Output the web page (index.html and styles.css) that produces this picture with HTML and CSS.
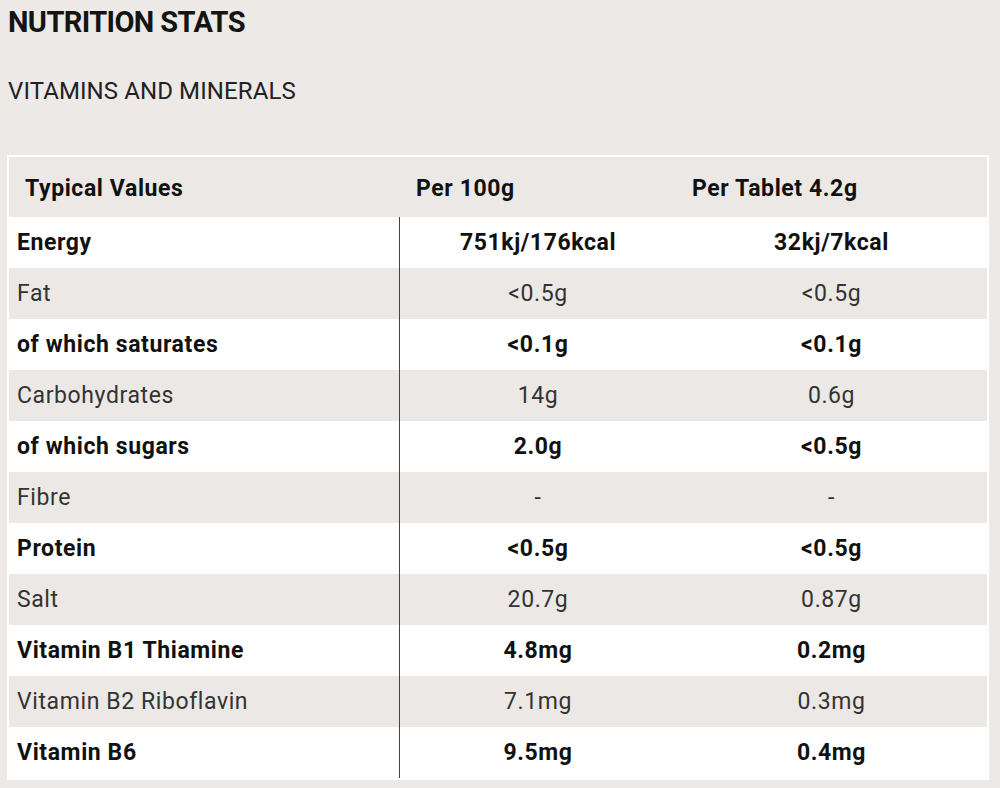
FILE: index.html
```html
<!DOCTYPE html>
<html>
<head>
<meta charset="utf-8">
<link rel="stylesheet" href="styles.css">
</head>
<body>
<div class="page">
  <h1 class="title">NUTRITION STATS</h1>
  <h2 class="subtitle">VITAMINS AND MINERALS</h2>
  <table class="nutri">
    <colgroup>
      <col class="w1">
      <col class="w2">
      <col class="w3">
    </colgroup>
    <thead>
      <tr>
        <th>Typical Values</th>
        <th>Per 100g</th>
        <th>Per Tablet 4.2g</th>
      </tr>
    </thead>
    <tbody>
      <tr class="b"><td class="c1">Energy</td><td>751kj/176kcal</td><td>32kj/7kcal</td></tr>
      <tr class="g"><td class="c1">Fat</td><td>&lt;0.5g</td><td>&lt;0.5g</td></tr>
      <tr class="b"><td class="c1">of which saturates</td><td>&lt;0.1g</td><td>&lt;0.1g</td></tr>
      <tr class="g"><td class="c1">Carbohydrates</td><td>14g</td><td>0.6g</td></tr>
      <tr class="b"><td class="c1">of which sugars</td><td>2.0g</td><td>&lt;0.5g</td></tr>
      <tr class="g"><td class="c1">Fibre</td><td>-</td><td>-</td></tr>
      <tr class="b"><td class="c1">Protein</td><td>&lt;0.5g</td><td>&lt;0.5g</td></tr>
      <tr class="g"><td class="c1">Salt</td><td>20.7g</td><td>0.87g</td></tr>
      <tr class="b"><td class="c1">Vitamin B1 Thiamine</td><td>4.8mg</td><td>0.2mg</td></tr>
      <tr class="g"><td class="c1">Vitamin B2 Riboflavin</td><td>7.1mg</td><td>0.3mg</td></tr>
      <tr class="b"><td class="c1">Vitamin B6</td><td>9.5mg</td><td>0.4mg</td></tr>
    </tbody>
  </table>
</div>
</body>
</html>
```
FILE: styles.css
```css
html, body {
  margin: 0;
  padding: 0;
  background: #ece9e6;
}
body {
  font-family: Roboto, "Liberation Sans", Arial, sans-serif;
  color: #222;
}
.page {
  padding: 4px 11px 0 7px;
}
.title {
  margin: 0 0 0 1px;
  font-size: 29px;
  line-height: 36px;
  font-weight: 700;
  letter-spacing: -0.6px;
  color: #141414;
}
.subtitle {
  margin: 37px 0 0 1px;
  font-size: 24px;
  line-height: 28px;
  font-weight: 400;
  letter-spacing: 0.1px;
  color: #222;
}
.nutri {
  margin-top: 50px;
  width: 982px;
  table-layout: fixed;
  border-collapse: separate;
  border-spacing: 0;
  border: 2px solid #fff;
  font-size: 23px;
  letter-spacing: 0.6px;
}
.w1 { width: 391px; }
.w2 { width: 276px; }
.w3 { width: 311px; }
.nutri th {
  height: 60px;
  box-sizing: border-box;
  padding: 2px 0 0 16px;
  text-align: left;
  font-weight: 700;
  color: #111;
  background: #ebe8e5;
}
.nutri td {
  height: 51px;
  box-sizing: border-box;
  padding: 0;
  text-align: center;
}
.nutri td.c1 {
  text-align: left;
  padding-left: 8px;
  border-right: 1px solid #444;
}
.nutri tr.b td {
  background: #fff;
  font-weight: 700;
  color: #111;
}
.nutri tr.g td {
  background: #ebe8e5;
  font-weight: 400;
  color: #333;
}
```
